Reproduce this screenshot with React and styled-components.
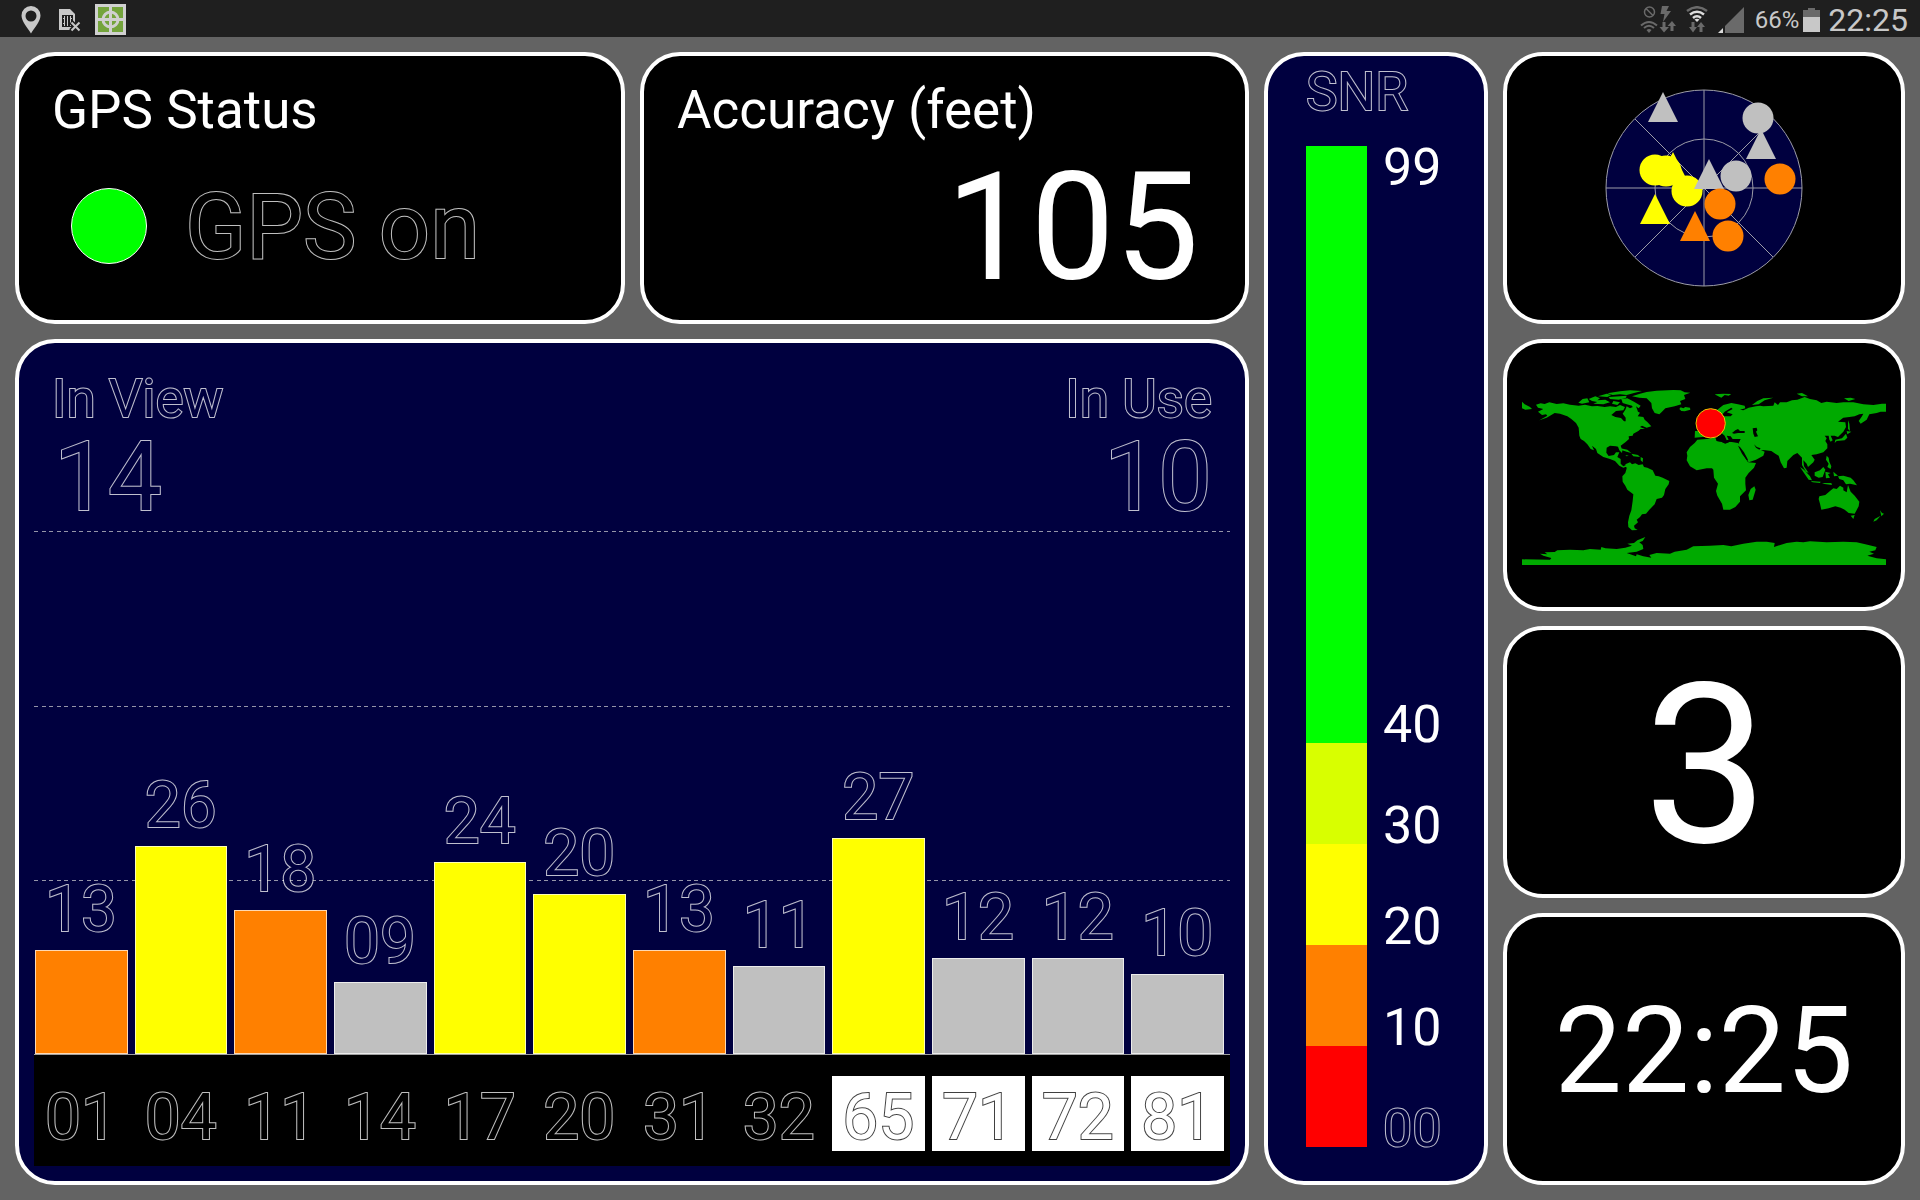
import React from 'react';
import styled, { createGlobalStyle } from 'styled-components';

const NAVY = '#00003f';
const GREEN = '#00ff00';
const LIME = '#d8ff00';
const YELLOW = '#ffff00';
const ORANGE = '#ff8000';
const RED = '#ff0000';
const GREY = '#c0c0c0';

// SNR value at the top edge of the plot
const PLOT_MAX = 87;

const satellites = [
  { prn: '01', snr: '13', color: ORANGE },
  { prn: '04', snr: '26', color: YELLOW },
  { prn: '11', snr: '18', color: ORANGE },
  { prn: '14', snr: '09', color: GREY },
  { prn: '17', snr: '24', color: YELLOW },
  { prn: '20', snr: '20', color: YELLOW },
  { prn: '31', snr: '13', color: ORANGE },
  { prn: '32', snr: '11', color: GREY },
  { prn: '65', snr: '27', color: YELLOW, glonass: true },
  { prn: '71', snr: '12', color: GREY, glonass: true },
  { prn: '72', snr: '12', color: GREY, glonass: true },
  { prn: '81', snr: '10', color: GREY, glonass: true }
];

const snrScale = [
  { label: '99', span: 59, color: GREEN },
  { label: '40', span: 10, color: LIME },
  { label: '30', span: 10, color: YELLOW },
  { label: '20', span: 10, color: ORANGE },
  { label: '10', span: 10, color: RED }
];

// positions on the sky plot, relative to the zenith
const skyMarks = [
  { x: -41, y: -66, color: GREY, tri: true },
  { x: 57, y: -29, color: GREY, tri: true },
  { x: 54, y: -70, color: GREY },
  { x: 76, y: -9, color: ORANGE },
  { x: 32, y: -12, color: GREY },
  { x: -31, y: -6, color: YELLOW, tri: true },
  { x: -38, y: -17, color: YELLOW },
  { x: -49, y: -18, color: YELLOW },
  { x: -17, y: 3, color: YELLOW },
  { x: 5, y: 1, color: GREY, tri: true },
  { x: -49, y: 36, color: YELLOW, tri: true },
  { x: 16, y: 16, color: ORANGE },
  { x: -9, y: 53, color: ORANGE, tri: true },
  { x: 24, y: 48, color: ORANGE }
];

const land = [
  // North America
  'M78 103L92 99L104 101L118 96L140 101L160 99L180 103L206 106L225 103L246 108L262 107L284 110L300 108L318 110L330 104L345 110L340 120L318 122L304 134L316 140L333 143L342 153L347 153L347 142L338 130L346 118L350 108L360 114L368 110L375 120L390 127L383 138L400 140L404 148L412 155L424 168L410 172L396 166L390 170L405 176L392 176L385 182L370 190L368 196L356 198L357 206L346 216L332 226L337 240L336 248L328 240L324 229L318 228L300 226L290 232L289 247L296 257L312 254L318 246L328 246L322 260L332 266L332 280L340 288L348 284L352 288L340 292L328 286L315 272L300 266L280 260L262 248L258 236L246 226L252 240L242 236L232 222L222 212L212 206L208 196L206 172L198 158L184 146L172 138L150 130L134 128L110 142L88 150L112 136L108 132L96 134L84 124L100 116L84 112Z',
  // Arctic islands
  'M205 97L218 86L232 84L238 96L216 100ZM236 86L256 78L270 84L262 90L286 88L300 96L280 102L250 100L262 95L246 92ZM264 78L290 70L304 74L292 80ZM292 69L330 63L360 60L396 62L372 68L350 74L330 72L308 74ZM296 80L330 78L350 76L348 82L326 88L300 86ZM310 92L330 96L322 104L306 100ZM334 86L352 84L372 94L392 106L386 114L378 108L384 124L372 118L366 106L350 102L338 98Z',
  // Greenland and Iceland
  'M366 78L390 70L410 65L440 61L490 59L512 60L524 66L541 67L522 74L526 86L510 92L514 102L494 108L466 114L456 124L448 132L434 128L426 114L424 98L410 84L388 82ZM508 116L512 111L520 114L526 110L540 112L541 118L524 123L514 122Z',
  // Caribbean
  'M332 234L352 238L364 248L350 244L336 240ZM364 250L384 254L390 260L370 258ZM346 254L356 256L350 258ZM392 260L399 264L398 276L392 270Z',
  // South America
  'M346 282L360 276L366 282L376 279L386 284L398 282L402 290L412 292L428 300L436 316L446 318L458 322L478 332L476 342L466 356L462 374L456 382L440 386L434 402L418 418L408 430L396 432L390 440L380 448L384 456L372 466L374 474L383 479L366 480L355 470L354 456L358 436L364 420L368 392L370 372L352 358L346 346L338 334L337 318L346 308L350 294Z',
  // Africa
  'M562 208L590 206L616 202L620 212L634 214L646 220L660 214L684 218L690 234L700 252L714 276L738 278L732 292L716 308L706 322L706 340L708 360L690 378L690 394L676 410L660 418L640 418L636 400L622 376L618 362L624 340L612 322L610 298L606 294L590 294L560 300L540 288L530 270L532 256L530 246L540 230L554 218ZM733 348L737 358L728 388L718 390L715 374L722 356Z',
  // Eurasia
  'M554 202L555 182L572 182L560 166L580 150L606 136L622 118L640 104L664 98L684 102L704 106L706 114L690 118L700 120L716 112L738 108L750 106L760 108L790 106L794 96L804 104L810 96L830 96L846 90L862 88L884 80L900 86L920 90L934 98L950 94L980 98L1000 96L1030 96L1060 102L1090 104L1116 100L1128 100L1128 124L1112 124L1100 128L1078 132L1070 148L1052 160L1046 152L1056 138L1060 130L1048 132L1034 138L1018 140L1000 142L984 154L1006 156L1008 170L1000 184L984 200L974 196L962 196L968 210L962 214L958 208L956 196L944 196L950 204L946 212L952 222L952 234L940 246L920 252L904 254L914 268L910 276L894 290L890 280L880 270L882 288L896 308L888 304L876 284L876 262L862 248L850 254L832 272L830 292L822 294L812 276L806 256L796 250L784 242L766 240L746 238L736 224L742 234L764 244L760 256L738 268L716 276L702 250L684 228L686 218L692 206L668 206L662 198L650 196L656 208L650 210L644 196L630 184L616 196Z',
  // Northern islands
  'M614 72L640 70L664 71L656 76L644 74L634 82L622 76ZM726 104L742 92L760 84L790 82L764 90L746 102ZM860 70L876 68L894 78L876 78ZM1002 84L1022 82L1036 86L1016 92ZM36 94L44 102L60 110L66 116L46 118L36 114Z',
  // Japan, Sakhalin and Philippines
  'M1014 150L1018 160L1020 182L1014 176ZM1010 182L1024 184L1012 192ZM1008 190L1012 202L1004 210L980 212L974 218L976 208L996 204ZM950 256L956 262L958 274L964 288L962 296L952 290L956 280L948 268Z',
  // Indonesia and New Guinea
  'M870 290L882 298L900 318L906 330L896 328L882 308ZM902 332L932 334L930 338L908 336ZM936 338L964 338L966 344L944 341ZM914 306L930 300L940 290L946 298L938 320L926 322L914 316ZM946 304L962 308L954 312L960 322L948 324ZM970 304L984 316L972 318ZM984 318L1000 316L1022 322L1030 330L1041 345L1020 340L1008 342L1000 330L988 326Z',
  // Australia and New Zealand
  'M928 378L946 374L960 362L970 354L980 356L990 346L1000 352L1000 360L1010 366L1014 344L1022 364L1034 376L1048 394L1046 408L1034 430L1016 428L1004 418L992 412L976 408L956 414L934 418L930 400L926 386ZM1022 436L1034 434L1030 446ZM1110 420L1116 428L1122 430L1114 438ZM1112 436L1100 450L1090 454L1094 446Z',
  // Antarctica
  'M36 567L120 568L124 563L100 556L90 550L112 552L104 546L134 545L142 540L180 538L220 540L240 536L272 538L274 530L286 534L320 536L346 532L366 526L352 520L372 518L382 510L406 500L398 512L388 516L398 524L400 536L380 544L350 548L378 558L380 552L400 558L424 562L418 554L440 548L480 550L494 544L530 538L550 528L600 526L640 524L664 528L700 520L740 514L770 514L794 518L792 530L830 518L860 514L880 516L900 513L950 516L1000 514L1040 516L1066 522L1100 530L1096 540L1078 544L1092 550L1072 556L1100 564L1128 567L1128 584L36 584Z'
].join('');

const water = [
  'M666 188L676 180L684 176L690 182L704 182L704 188L684 188L672 190Z',
  'M728 174L740 172L742 180L738 184L744 198L734 200L730 190Z',
  'M636 134L644 124L664 112L668 116L650 126L668 132L662 138L644 138Z',
  'M684 226L690 230L702 246L714 268L710 270L696 250Z',
  'M620 202L640 202L646 212L664 206L690 206L686 216L660 214L644 219L634 214L620 212Z',
  'M732 222L740 230L752 234L748 238L738 232Z'
].join('');

function StatusBar() {
  return (
    <Bar>
      <IconGroup>
        <svg width="24" height="28" viewBox="0 0 24 28" aria-label="Location">
          <path fill="#c8c8c8" fillRule="evenodd" d="M10 0A9.500 9.500 0 0 0 .5 9.500C.5 15 6 21 10 27.500C14 21 19.500 15 19.500 9.500A9.500 9.500 0 0 0 10 0ZM10 4.500A5.500 5.500 0 1 1 10 15.500A5.500 5.500 0 0 1 10 4.500Z" />
        </svg>
        <svg width="22" height="24" viewBox="0 0 22 24" aria-label="No SIM card">
          <path fill="#c8c8c8" d="M0 1H11L16 6V14L13 22H0Z" />
          <path fill="#1f1f1f" d="M3 7H14V19H3Z" />
          <path stroke="#c8c8c8" strokeWidth="1" d="M5.500 8V18M8.500 8V18M11.500 8V18M4 10.500H6M4 15.500H6M11 10.500H13" />
          <path stroke="#1f1f1f" strokeWidth="5" d="M12 14L21 23M21 14L12 23" />
          <path stroke="#c8c8c8" strokeWidth="2" d="M12.500 14.500L20.500 22.500M20.500 14.500L12.500 22.500" />
        </svg>
        <svg width="31" height="31" viewBox="0 0 31 31" aria-label="GPS Test">
          <path fill="#d0d0d0" d="M0 0H31V31H0Z" />
          <path fill="#74a43c" d="M3 3H28V28H3Z" />
          <g fill="none" stroke="#d0d0d0" strokeWidth="3">
            <circle cx="15.500" cy="15.500" r="7.500" />
            <path d="M15.500 3V28M3 15.500H28" />
          </g>
        </svg>
      </IconGroup>
      <IconGroup $tight>
        <svg width="36" height="27" viewBox="0 0 36 27" fill="none" stroke="#6a6a6a" aria-label="Download booster">
          <circle cx="9.500" cy="6" r="5" strokeWidth="1.500" />
          <path strokeWidth="1.500" d="M6 2.500L13 9.500" />
          <path fill="#6a6a6a" stroke="none" d="M22 0H29L26.500 5H31L23 16L24.500 8H20.500Z" />
          <path strokeWidth="2" d="M1 19.500Q9 12.500 17 19.500M4 22Q9 17.500 14 22" />
          <path fill="#6a6a6a" stroke="none" d="M6.500 24Q9 22 11.500 24L9 27Z" />
          <path fill="#6a6a6a" stroke="none" d="M22.500 16H25.500V21H29L24 26.500L19.500 21H22.500ZM32 15L36 20H33.500V25H30.500V20H27.500Z" />
        </svg>
        <svg width="22" height="27" viewBox="0 0 22 27" fill="none" aria-label="Wi-Fi">
          <path stroke="#6a6a6a" strokeWidth="2.500" d="M1 5Q11 -2.500 21 5" />
          <path stroke="#dcdcdc" strokeWidth="2.500" d="M4 8.500Q11 3 18 8.500M7 12Q11 8.500 15 12" />
          <path fill="#dcdcdc" d="M8.500 13.500Q11 12 13.500 13.500L11 16Z" />
          <path fill="#6a6a6a" d="M5.500 16H8.500V21H11L7 26.500L3 21H5.500ZM15 16L19 21H16.500V26H13.500V21H11Z" />
        </svg>
        <svg width="27" height="26" viewBox="0 0 27 26" aria-label="Signal">
          <path fill="#6a6a6a" d="M26 0V26H7V19Z" />
          <path fill="#dcdcdc" d="M5 21V26H0Z" />
        </svg>
        <BatteryText>66%</BatteryText>
        <svg width="17" height="24" viewBox="0 0 17 24" aria-label="Battery">
          <path fill="#6a6a6a" d="M5 0H12V2H17V9H0V2H5Z" />
          <path fill="#c8c8c8" d="M0 9H17V24H0Z" />
        </svg>
        <BarClock>22:25</BarClock>
      </IconGroup>
    </Bar>
  );
}

function SignalChart() {
  return (
    <ChartCard>
      <Plot>
        <Gridlines>
          <GridBand />
          <GridBand $line />
          <GridBand $line />
          <GridBand $line />
        </Gridlines>
        <Counts>
          <Count>
            <Caption>In View</Caption>
            <CountValue>14</CountValue>
          </Count>
          <Count $end>
            <Caption>In Use</Caption>
            <CountValue>10</CountValue>
          </Count>
        </Counts>
        <Columns>
          {satellites.map(sat => (
            <BarColumn key={sat.prn}>
              <BarValue>{sat.snr}</BarValue>
              <SignalBar $color={sat.color} style={{ height: `${(Number(sat.snr) / PLOT_MAX) * 100}%` }} />
            </BarColumn>
          ))}
        </Columns>
      </Plot>
      <PrnStrip>
        {satellites.map(sat => (
          <PrnCell key={sat.prn}>
            <Prn $glonass={sat.glonass}>{sat.prn}</Prn>
          </PrnCell>
        ))}
      </PrnStrip>
    </ChartCard>
  );
}

function SnrLegend() {
  return (
    <SnrCard>
      <Caption>SNR</Caption>
      <Scale>
        {snrScale.map((step, i) => (
          <ScaleStep key={step.label} $span={step.span}>
            <Swatch $color={step.color} />
            <StepLabels>
              <StepLabel>{i === 0 ? step.label : ''}</StepLabel>
              {i < snrScale.length - 1
                ? <StepLabel>{snrScale[i + 1].label}</StepLabel>
                : <StepLabel $outline>00</StepLabel>}
            </StepLabels>
          </ScaleStep>
        ))}
      </Scale>
    </SnrCard>
  );
}

function SkyPlot() {
  return (
    <svg width="198" height="198" viewBox="-99 -99 198 198" role="img" aria-label="Sky view">
      <circle r="98" fill={NAVY} />
      <g fill="none" stroke="#9c9ca8" strokeWidth="1">
        <circle r="98" />
        <circle r="49" />
        <path d="M-98 0H98M0 -98V98M-69 -69L69 69M69 -69L-69 69" />
      </g>
      {skyMarks.map(({ x, y, color, tri }) => tri
        ? <path key={`${x},${y}`} fill={color} d={`M${x} ${y - 30}l15 30h-30Z`} />
        : <circle key={`${x},${y}`} fill={color} cx={x} cy={y} r="15.500" />
      )}
    </svg>
  );
}

function WorldMap() {
  return (
    <svg width="364" height="182" viewBox="36 41 1092 546" role="img" aria-label="World map">
      <path fill="#00aa00" d={land} />
      <path fill="#000" d={water} />
      <circle cx="602" cy="159" r="44" fill={RED} stroke="#e8c800" strokeWidth="3" />
    </svg>
  );
}

const App = () => (
  <Screen>
    <GlobalStyle />
    <StatusBar />
    <Dashboard>
      <StatusCard>
        <Title>GPS Status</Title>
        <StatusRow>
          <Led />
          <StatusText>GPS on</StatusText>
        </StatusRow>
      </StatusCard>
      <StatusCard>
        <Title>Accuracy (feet)</Title>
        <AccuracyValue>105</AccuracyValue>
      </StatusCard>
      <SnrLegend />
      <CenterCard><SkyPlot /></CenterCard>
      <SignalChart />
      <CenterCard><WorldMap /></CenterCard>
      <CenterCard><FixValue>3</FixValue></CenterCard>
      <CenterCard><ClockValue>22:25</ClockValue></CenterCard>
    </Dashboard>
  </Screen>
);

const GlobalStyle = createGlobalStyle`
  * {
    box-sizing: border-box;
  }

  body {
    margin: 0;
    background: #636363;
    color: #fff;
    font-family: Roboto, "Liberation Sans", sans-serif;
  }

  svg {
    display: block;
    flex: none;
  }
`;

const Screen = styled.div`
  display: flex;
  flex-direction: column;
  min-height: 100vh;
`;

const Bar = styled.header`
  display: flex;
  justify-content: space-between;
  align-items: center;
  height: 37px;
  padding: 2px 12px 0 21px;
  background: #1f1f1f;
  color: #c8c8c8;
`;

const IconGroup = styled.div`
  display: flex;
  align-items: center;
  gap: ${props => props.$tight ? '10px' : '14px'};
`;

const BatteryText = styled.span`
  font-size: 24px;
  line-height: 32px;
  margin-right: -6px;
`;

const BarClock = styled.time`
  font-size: 32px;
  line-height: 32px;
  margin-left: -2px;
`;

const Dashboard = styled.main`
  flex: 1;
  display: grid;
  grid-template-columns: 610fr 609fr 224fr 402fr;
  grid-template-rows: repeat(4, minmax(272px, 1fr));
  gap: 15px;
  padding: 15px;
`;

const Card = styled.section`
  display: flex;
  flex-direction: column;
  min-width: 0;
  border: 4px solid #fff;
  border-radius: 40px;
  background: #000;
`;

const StatusCard = styled(Card)`
  padding: 24px 33px 0;
`;

const CenterCard = styled(Card)`
  align-items: center;
  justify-content: center;
`;

const Title = styled.h2`
  margin: 0;
  font-size: 53px;
  font-weight: 400;
  line-height: 60px;
`;

// Hollow lettering: the fill covers the inner half of the stroke.
const hollow = (fill, line = 'rgba(255, 255, 255, 0.75)') => `
  color: ${fill};
  -webkit-text-stroke: 2px ${line};
  paint-order: stroke fill;
`;

const StatusRow = styled.div`
  display: flex;
  align-items: flex-end;
  gap: 38px;
  margin-top: 48px;
  padding-left: 19px;
`;

const Led = styled.span`
  width: 76px;
  height: 76px;
  border: 1px solid #fff;
  border-radius: 50%;
  background: ${GREEN};
`;

const StatusText = styled.span`
  ${hollow('#000')}
  font-size: 90px;
  line-height: 72px;
`;

const AccuracyValue = styled.output`
  margin-top: 13px;
  padding-right: 13px;
  font-size: 150px;
  line-height: 150px;
  text-align: right;
`;

const FixValue = styled.output`
  padding: 8px 0 0 4px;
  font-size: 222px;
  line-height: 240px;
`;

const ClockValue = styled.time`
  padding-top: 4px;
  font-size: 120px;
  line-height: 132px;
`;

const Caption = styled.span`
  ${hollow(NAVY)}
  font-size: 53px;
  line-height: 60px;
`;

const ChartCard = styled(Card)`
  grid-column: 1 / 3;
  grid-row: 2 / 5;
  padding: 14px 15px 15px;
  background: ${NAVY};
`;

/* grid lines, counters and bars share one cell */
const Plot = styled.div`
  flex: 1;
  display: grid;
  border-bottom: 1px solid #a0a0a0;

  > * {
    grid-area: 1 / 1;
  }
`;

const Gridlines = styled.div`
  display: grid;
  grid-template-rows: repeat(4, 1fr);
`;

const GridBand = styled.div`
  background: ${props => props.$line
    ? 'repeating-linear-gradient(90deg, #9494a8 0 4px, transparent 4px 8px, #9494a8 8px 12px, transparent 12px 15px) top / 100% 1px no-repeat'
    : 'none'};
`;

const Counts = styled.div`
  display: flex;
  justify-content: space-between;
  align-items: flex-start;
  padding: 12px 18px 0;
`;

const Count = styled.div`
  display: flex;
  flex-direction: column;
  align-items: ${props => props.$end ? 'flex-end' : 'flex-start'};
`;

const CountValue = styled.output`
  ${hollow(NAVY)}
  padding-left: 2px;
  font-size: 96px;
  line-height: 96px;
`;

const Columns = styled.div`
  display: grid;
  grid-template-columns: repeat(12, 1fr);
`;

const BarColumn = styled.div`
  display: flex;
  flex-direction: column;
  justify-content: flex-end;
  padding: 0 6px 0 1px;
`;

const BarValue = styled.span`
  ${hollow(NAVY)}
  padding-left: 10px;
  font-size: 64px;
  line-height: 80px;
`;

const SignalBar = styled.div`
  flex: none;
  border: 1px solid rgba(255, 255, 255, 0.7);
  background: ${props => props.$color};
`;

const PrnStrip = styled.div`
  display: grid;
  grid-template-columns: repeat(12, 1fr);
  height: 111px;
  padding-top: 21px;
  background: #000;
`;

const PrnCell = styled.div`
  padding: 0 6px 0 1px;
`;

const Prn = styled.div`
  ${props => props.$glonass ? hollow('#fff', 'rgba(0, 0, 0, 0.75)') : hollow('#000')}
  height: 75px;
  padding-left: 10px;
  font-size: 64px;
  line-height: 84px;
  background: ${props => props.$glonass ? '#fff' : 'none'};
`;

const SnrCard = styled(Card)`
  grid-row: 1 / 5;
  padding: 6px 38px 34px;
  background: ${NAVY};
`;

const Scale = styled.div`
  flex: 1;
  display: flex;
  flex-direction: column;
  margin-top: 24px;
`;

const ScaleStep = styled.div`
  flex: ${props => props.$span} 0 0;
  display: flex;
  gap: 16px;
  min-height: 0;
`;

const Swatch = styled.div`
  width: 61px;
  background: ${props => props.$color};
`;

const StepLabels = styled.div`
  display: flex;
  flex-direction: column;
  justify-content: space-between;
  padding-top: 4px;
`;

const StepLabel = styled.span`
  ${props => props.$outline ? hollow(NAVY) : ''}
  font-size: 52px;
  line-height: 36px;
`;

export default App;
